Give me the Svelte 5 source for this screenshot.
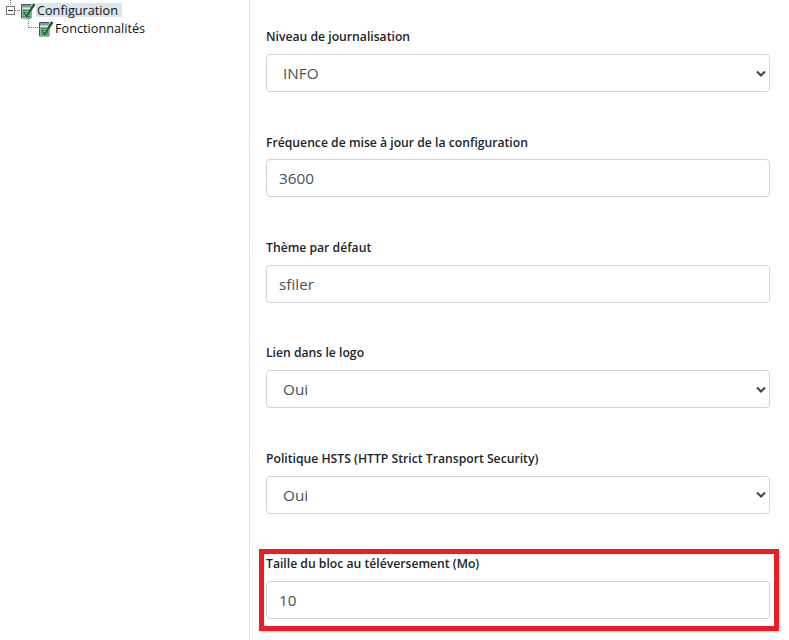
<script>
    const fields = [
        { label: 'Niveau de journalisation', type: 'select', value: 'INFO' },
        { label: 'Fréquence de mise à jour de la configuration', type: 'input', value: '3600' },
        { label: 'Thème par défaut', type: 'input', value: 'sfiler' },
        { label: 'Lien dans le logo', type: 'select', value: 'Oui' },
        { label: 'Politique HSTS (HTTP Strict Transport Security)', type: 'select', value: 'Oui' },
        { label: 'Taille du bloc au téléversement (Mo)', type: 'input', value: '10', marked: true }
    ];
</script>

{#snippet checkIcon()}
    <svg class="icon" width="16" height="17" viewBox="0 0 16 17">
        <path d="M1.5 2.5h9.5v13.5h-9.5z" fill="#dfe8df" stroke="#3f5a50" />
        <path d="M2 3h8.5v2.5H2z" fill="#7f9ba3" />
        <path d="M2 7h8.5v8.5H2z" fill="#8cc08a" />
        <path d="M3 8.5h7M3 10.5h7M3 12.5h7M3 14.5h7" stroke="#1f7f3a" stroke-width="1.1" />
        <path d="M3 9.5l3 2.6L13 1l2.4 1.4L6.6 16 5 15.5z" fill="#fff" opacity=".55" />
        <path d="M3.4 10l2.9 3.4L13.4 1.6 15.2 2.8 6.4 15.6z" fill="#146a2a" stroke="#0e3f1c" stroke-width=".6" />
    </svg>
{/snippet}

<div class="page">
    <aside class="tree">
        <div class="node root">
            <span class="expander"></span>
            <span class="dash"></span>
            {@render checkIcon()}
            <span class="name selected">Configuration</span>
        </div>
        <div class="node child">
            <span class="elbow"></span>
            {@render checkIcon()}
            <span class="name">Fonctionnalités</span>
        </div>
    </aside>

    <main class="form">
        {#each fields as f}
            <div class="field" class:marked={f.marked}>
                <label for={f.label}>{f.label}</label>
                {#if f.type === 'select'}
                    <select id={f.label}>
                        <option>{f.value}</option>
                    </select>
                {:else}
                    <input id={f.label} type="text" value={f.value} />
                {/if}
                {#if f.marked}
                    <div class="redbox"></div>
                {/if}
            </div>
        {/each}
    </main>
</div>

<style>
    :global(body) {
        margin: 0;
        background: #fff;
        font-family: "Open Sans", "Noto Sans", sans-serif;
        overflow: hidden;
    }

    .page {
        display: flex;
        height: 640px;
        overflow: hidden;
    }

    .tree {
        width: 250px;
        flex: none;
        box-sizing: border-box;
        border-right: 1px solid #dee2e6;
        font-size: 12.7px;
        color: #111;
    }

    .node {
        display: flex;
        align-items: center;
        height: 18px;
        position: relative;
    }

    .root {
        margin-top: 1px;
        padding-left: 6px;
    }

    .root::before {
        content: "";
        position: absolute;
        left: 10px;
        top: -1px;
        height: 5px;
        border-left: 1px dotted #777;
    }

    .child {
        padding-left: 28px;
    }

    .expander {
        width: 7px;
        height: 7px;
        border: 1px solid #777;
        background: linear-gradient(#333, #333) center / 5px 1px no-repeat #fff;
        flex: none;
    }

    .dash {
        width: 5px;
        border-top: 1px dotted #777;
        flex: none;
    }

    .elbow {
        width: 10px;
        height: 10px;
        margin-top: -10px;
        border-left: 1px dotted #777;
        border-bottom: 1px dotted #777;
        box-sizing: border-box;
        flex: none;
    }

    .icon {
        flex: none;
    }

    .name {
        padding: 0 4px 0 1px;
        line-height: 14px;
        white-space: nowrap;
    }

    .selected {
        background: #d9e6ee;
    }

    .form {
        flex: 1;
        padding: 28px 19px 0 16px;
        min-width: 0;
    }

    .field {
        position: relative;
        height: 105.4px;
    }

    label {
        display: block;
        box-sizing: border-box;
        height: 26px;
        padding-top: 0.3px;
        font-size: 12.2px;
        line-height: 18px;
        font-weight: 600;
        color: #212529;
    }

    input,
    select {
        display: block;
        box-sizing: border-box;
        width: 100%;
        height: 38px;
        border: 1px solid #ced4da;
        border-radius: 4px;
        background-color: #fff;
        color: #495057;
        font-family: inherit;
        font-size: 15.3px;
        padding: 0 12px;
        outline: none;
    }

    select {
        padding-left: 16px;
        appearance: none;
        background-image: url("data:image/svg+xml,%3Csvg xmlns='http://www.w3.org/2000/svg' width='10' height='7' viewBox='0 0 10 7'%3E%3Cpath d='M1 1.5l4 4 4-4' fill='none' stroke='%23444' stroke-width='2'/%3E%3C/svg%3E");
        background-repeat: no-repeat;
        background-position: right 3px center;
    }

    .redbox {
        position: absolute;
        left: -7px;
        right: -9px;
        top: -6px;
        height: 82px;
        box-sizing: border-box;
        border: 5px solid #ed1c24;
        pointer-events: none;
    }
</style>
